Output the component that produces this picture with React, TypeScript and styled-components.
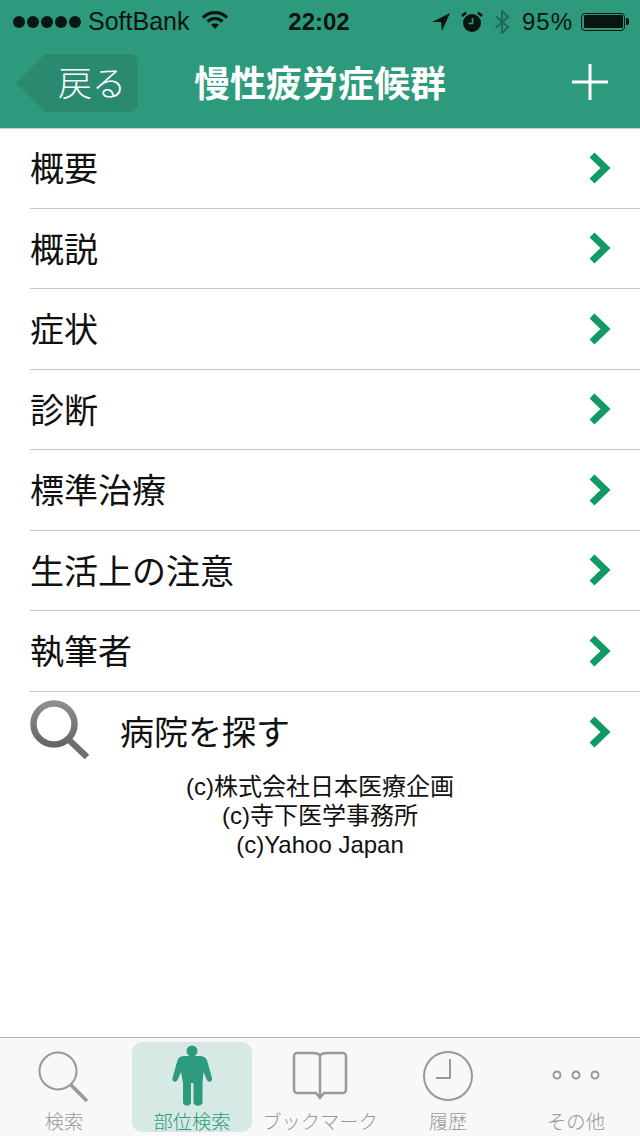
import styled, { createGlobalStyle } from "styled-components";

const GlobalStyle = createGlobalStyle`
  html, body {
    margin: 0;
    padding: 0;
    background: #fff;
  }
  body {
    font-family: "Liberation Sans", "Noto Sans CJK JP", sans-serif;
  }
`;

const Page = styled.div`
  width: 640px;
  height: 1136px;
  display: flex;
  flex-direction: column;
  overflow: hidden;
  background: #fff;
`;

const Header = styled.header`
  height: 129px;
  flex: none;
  box-sizing: border-box;
  background: #2e9a7d;
  border-bottom: 1px solid #bfd3cd;
  display: flex;
  flex-direction: column;
`;

const StatusBar = styled.div`
  height: 40px;
  flex: none;
  display: flex;
  align-items: center;
  padding: 3px 12px 0 13px;
  box-sizing: border-box;
  color: #0a1512;
  font-size: 24px;
`;

const StatusSide = styled.div<{ $end?: boolean }>`
  flex: 1;
  display: flex;
  align-items: center;
  justify-content: ${(p) => (p.$end ? "flex-end" : "flex-start")};
`;

const Carrier = styled.span`
  font-size: 25px;
`;

const Dots = styled.div`
  display: flex;
  gap: 2px;
  margin-right: 7px;
`;

const Dot = styled.span`
  width: 12px;
  height: 12px;
  border-radius: 50%;
  background: #0a1512;
`;

const Clock = styled.div`
  font-weight: 700;
  font-size: 24px;
  margin-left: -3px;
  color: #0a1512;
`;

const Percent = styled.span`
  letter-spacing: 1px;
`;

const Battery = styled.div`
  width: 44px;
  height: 18px;
  border: 1.5px solid #0a1512;
  border-radius: 4px;
  padding: 1.5px;
  box-sizing: border-box;
  margin-left: 8px;
  margin-right: 3px;
  position: relative;
  &::before {
    content: "";
    display: block;
    height: 100%;
    background: #0a1512;
    border-radius: 1.5px;
  }
  &::after {
    content: "";
    position: absolute;
    right: -5px;
    top: 4px;
    width: 3px;
    height: 7px;
    background: #0a1512;
    border-radius: 0 2px 2px 0;
  }
`;

const NavBar = styled.div`
  flex: 1;
  display: flex;
  align-items: center;
  justify-content: space-between;
  padding: 0 32px 0 16px;
  position: relative;
`;

const BackButton = styled.div`
  width: 122px;
  height: 58px;
  margin-top: -2px;
  background: #2a8a70;
  clip-path: polygon(29px 0, 100% 0, 100% 100%, 29px 100%, 0 50%);
  border-radius: 0 8px 8px 0;
  color: #fff;
  font-family: "Noto Sans CJK JP", sans-serif;
  font-weight: 300;
  font-size: 34px;
  line-height: 56px;
  display: flex;
  align-items: flex-start;
  justify-content: flex-end;
  padding-right: 12px;
  box-sizing: border-box;
`;

const Title = styled.h1`
  position: absolute;
  left: 0;
  right: 0;
  top: 50%;
  transform: translateY(-50%);
  margin: -3px 0 0;
  text-align: center;
  color: #fff;
  font-family: "Noto Sans CJK JP", sans-serif;
  font-weight: 700;
  font-size: 36px;
  line-height: 44px;
  pointer-events: none;
`;

const Content = styled.main`
  flex: 1;
  margin-top: -1px;
  display: flex;
  flex-direction: column;
`;

const Row = styled.div`
  height: 80.5px;
  margin-left: 30px;
  padding-right: 30px;
  box-sizing: border-box;
  display: flex;
  align-items: center;
  justify-content: space-between;
  border-bottom: 1px solid #c8c8c8;
  color: #111;
  font-family: "Noto Sans CJK JP", sans-serif;
  font-size: 34px;
  font-weight: 400;
`;

const LastRow = styled(Row)`
  border-bottom: none;
`;

const RowText = styled.span`
  margin-top: -2px;
`;

const RowLabel = styled.div`
  display: flex;
  align-items: center;
  gap: 30px;
`;

const Footer = styled.div`
  text-align: center;
  font-size: 24px;
  line-height: 29px;
  color: #111;
`;

const TabBar = styled.nav`
  height: 99px;
  flex: none;
  background: #f8f8f8;
  border-top: 1px solid #b4b4b4;
  box-sizing: border-box;
  display: grid;
  grid-template-columns: repeat(5, 1fr);
  padding-top: 4px;
`;

const Tab = styled.div<{ $active?: boolean }>`
  height: 90px;
  width: ${(p) => (p.$active ? "120px" : "auto")};
  justify-self: center;
  display: flex;
  flex-direction: column;
  align-items: center;
  justify-content: flex-start;
  border-radius: 10px;
  background: ${(p) => (p.$active ? "#d6e9e4" : "transparent")};
  color: ${(p) => (p.$active ? "#2e9a7d" : "#999")};
  font-family: "Noto Sans CJK JP", sans-serif;
  font-size: 19.3px;
  font-weight: 300;
  line-height: 24px;
  white-space: nowrap;
`;

const IconSlot = styled.div<{ $top: number }>`
  height: 67px;
  flex: none;
  box-sizing: border-box;
  padding-top: ${(p) => p.$top}px;
  display: flex;
  align-items: flex-start;
  justify-content: center;
`;

const TabIcon = styled.svg`
  display: block;
  flex: none;
`;

const Chevron = () => (
  <svg width="24" height="32" viewBox="0 0 24 32" style={{ marginRight: -2 }}>
    <path d="M4 3 L17.500 16 L4 29" fill="none" stroke="#0f9a66" strokeWidth="7" />
  </svg>
);

const rows = ["概要", "概説", "症状", "診断", "標準治療", "生活上の注意", "執筆者"];

export default function App() {
  return (
    <Page>
      <GlobalStyle />
      <Header>
        <StatusBar>
          <StatusSide>
            <Dots>
              {[0, 1, 2, 3, 4].map((i) => (
                <Dot key={i} />
              ))}
            </Dots>
            <Carrier>SoftBank</Carrier>
            <svg width="26" height="20" viewBox="0 0 26 20" style={{ marginLeft: 13, marginTop: -4 }}>
              <path d="M1 7.500 C8 1 18 1 25 7.500 M5.500 11.500 C10 7.500 16 7.500 20.500 11.500" fill="none" stroke="#0a1512" strokeWidth="3.200" />
              <path d="M9 14.500 C11 13 15 13 17 14.500 L13 19 Z" fill="#0a1512" />
            </svg>
          </StatusSide>
          <Clock>22:02</Clock>
          <StatusSide $end>
            <svg width="20" height="20" viewBox="0 0 20 20" style={{ marginRight: 10 }}>
              <path d="M19 1 L1 10 L10 10 L11 19 Z" fill="#0a1512" />
            </svg>
            <svg width="22" height="22" viewBox="0 0 22 22" style={{ marginRight: 11 }}>
              <circle cx="11" cy="12" r="9" fill="#0a1512" />
              <path d="M11.500 7 V12.500 H7.500" fill="none" stroke="#2e9a7d" strokeWidth="1.600" />
              <path d="M1 5 L5 1.500 M21 5 L17 1.500" stroke="#0a1512" strokeWidth="2.500" />
            </svg>
            <svg width="16" height="24" viewBox="0 0 16 24" style={{ marginRight: 12 }}>
              <path d="M2 6.500 L14 17 L8 23 V1 L14 7 L2 17.500" fill="none" stroke="#1f6a56" strokeWidth="2" />
            </svg>
            <Percent>95%</Percent>
            <Battery />
          </StatusSide>
        </StatusBar>
        <NavBar>
          <BackButton>戻る</BackButton>
          <Title>慢性疲労症候群</Title>
          <svg width="36" height="36" viewBox="0 0 36 36" style={{ marginTop: -5 }}>
            <path d="M18 0 V36 M0 18 H36" stroke="#fff" strokeWidth="3" />
          </svg>
        </NavBar>
      </Header>
      <Content>
        {rows.map((label) => (
          <Row key={label}>
            <RowText>{label}</RowText>
            <Chevron />
          </Row>
        ))}
        <LastRow>
          <RowLabel>
            <svg width="60" height="60" viewBox="0 0 60 60" style={{ marginTop: -4 }}>
              <defs>
                <linearGradient id="lens" x1="0" y1="0" x2="0" y2="1">
                  <stop offset="0" stopColor="#8e8e8e" />
                  <stop offset="1" stopColor="#666" />
                </linearGradient>
              </defs>
              <circle cx="24" cy="24" r="20.500" fill="none" stroke="url(#lens)" strokeWidth="6.500" />
              <path d="M38 39 L57 57" stroke="#6e6e6e" strokeWidth="6.500" />
            </svg>
            <RowText>病院を探す</RowText>
          </RowLabel>
          <Chevron />
        </LastRow>
        <Footer>
          (c)株式会社日本医療企画
          <br />
          (c)寺下医学事務所
          <br />
          (c)Yahoo Japan
        </Footer>
      </Content>
      <TabBar>
        <Tab>
          <IconSlot $top={9}>
            <TabIcon width="52" height="54" viewBox="0 0 52 54">
              <circle cx="20" cy="20" r="18.500" fill="none" stroke="#999" strokeWidth="2" />
              <path d="M33 34 L49 50" stroke="#999" strokeWidth="3.500" />
            </TabIcon>
          </IconSlot>
          検索
        </Tab>
        <Tab $active>
          <IconSlot $top={3}>
            <TabIcon width="40" height="62" viewBox="0 0 40 62">
              <circle cx="20" cy="6" r="5.500" fill="#2e9a7d" />
              <path
                d="M13 11 H27 C32 11 34.500 13 35.500 17 L40 33 C40.800 37 36.500 38 35 35 L31.500 27 L30.500 38 V57 C30.500 62 21.500 62 21.500 57 V38 H19 V57 C19 62 11 62 11 57 V38 L9 27 L5.500 35 C4 38 -0.500 37 0.500 33 L5 17 C6 13 8 11 13 11 Z"
                fill="#2e9a7d"
              />
            </TabIcon>
          </IconSlot>
          部位検索
        </Tab>
        <Tab>
          <IconSlot $top={9}>
            <TabIcon width="56" height="52" viewBox="0 0 56 52">
              <path
                d="M28 4 C26 2.500 24 2 21 2 H6 C3 2 2 3 2 6 V38 C2 41 3 42 6 42 H24 L28 47 L32 42 H50 C53 42 54 41 54 38 V6 C54 3 53 2 50 2 H35 C32 2 30 2.500 28 4 Z M28 4 V47"
                fill="none"
                stroke="#999"
                strokeWidth="2.500"
              />
            </TabIcon>
          </IconSlot>
          ブックマーク
        </Tab>
        <Tab>
          <IconSlot $top={8}>
            <TabIcon width="52" height="52" viewBox="0 0 52 52">
              <circle cx="26" cy="26" r="24" fill="none" stroke="#999" strokeWidth="2" />
              <path d="M28 9 V28 H14" fill="none" stroke="#999" strokeWidth="2" />
            </TabIcon>
          </IconSlot>
          履歴
        </Tab>
        <Tab>
          <IconSlot $top={7}>
            <TabIcon width="50" height="52" viewBox="0 0 50 52">
              <circle cx="6" cy="26" r="3.500" fill="none" stroke="#999" strokeWidth="2" />
              <circle cx="25" cy="26" r="3.500" fill="none" stroke="#999" strokeWidth="2" />
              <circle cx="44" cy="26" r="3.500" fill="none" stroke="#999" strokeWidth="2" />
            </TabIcon>
          </IconSlot>
          その他
        </Tab>
      </TabBar>
    </Page>
  );
}
